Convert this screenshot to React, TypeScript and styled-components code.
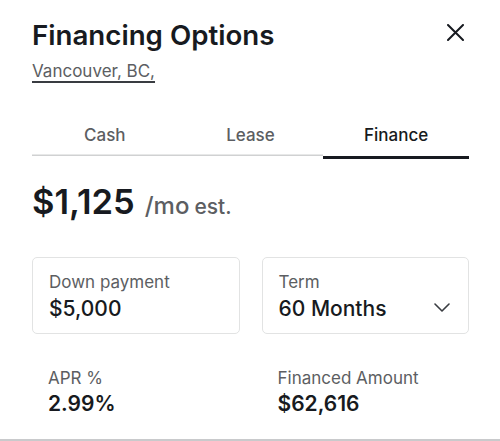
import React, { useState } from "react";
import styled, { createGlobalStyle } from "styled-components";

const GlobalStyle = createGlobalStyle`
  html, body { margin: 0; padding: 0; background: #ffffff; }
  body { font-family: Inter, "Noto Sans", sans-serif; color: #171a20; -webkit-font-smoothing: antialiased; }
  * { box-sizing: border-box; }
`;

const Panel = styled.div`
  width: 500px;
  height: 441px;
  padding: 19px 31px 0 32px;
  border-bottom: 2px solid #c9cacc;
  overflow: hidden;
`;

const Header = styled.div`
  display: flex;
  justify-content: space-between;
  align-items: flex-start;
`;

const Title = styled.h1`
  margin: 0;
  font-size: 27.7px;
  line-height: 32px;
  font-weight: 600;
  color: #171a20;
`;

const CloseButton = styled.button`
  border: 0;
  background: none;
  padding: 0;
  margin: 4px 5px 0 0;
  width: 18px;
  height: 18px;
  display: flex;
  align-items: center;
  justify-content: center;
  color: #171a20;
  cursor: pointer;
`;

const Location = styled.a`
  display: inline-block;
  margin-top: 10px;
  font-size: 17px;
  line-height: 20px;
  color: #5c5e62;
  text-decoration: underline;
  text-decoration-color: #393c41;
  text-underline-offset: 4px;
  text-decoration-thickness: 1.5px;
`;

const TabList = styled.div`
  display: grid;
  grid-template-columns: repeat(3, 1fr);
  margin-top: 44px;
`;

const Tab = styled.button<{ $active?: boolean }>`
  border: 0;
  background: none;
  font-family: inherit;
  font-size: 17px;
  line-height: 20px;
  font-weight: 500;
  padding: 0 0 11px;
  color: ${(p) => (p.$active ? "#171a20" : "#5c5e62")};
  border-bottom: 3px solid ${(p) => (p.$active ? "#171a20" : "transparent")};
  box-shadow: ${(p) => (p.$active ? "none" : "inset 0 -2px 0 -0.5px #d0d1d2")};
  cursor: pointer;
`;

const PriceRow = styled.div`
  display: flex;
  align-items: baseline;
  margin-top: 25px;
`;

const Price = styled.span`
  font-size: 34.5px;
  line-height: 36px;
  font-weight: 600;
  color: #171a20;
`;

const Per = styled.span`
  margin-left: 10px;
  font-size: 24px;
  font-weight: 500;
  color: #5c5e62;
`;

const Est = styled.span`
  margin-left: 5px;
  font-size: 21px;
  font-weight: 500;
  color: #5c5e62;
`;

const Fields = styled.div`
  display: grid;
  grid-template-columns: 1fr 1fr;
  column-gap: 22px;
  margin-top: 37px;
`;

const Field = styled.div`
  border: 1px solid #e2e3e3;
  border-radius: 5px;
  padding: 14px 16px 12px;
  display: flex;
  align-items: flex-end;
  justify-content: space-between;
`;

const FieldBody = styled.div`
  display: flex;
  flex-direction: column;
  gap: 5px;
`;

const Label = styled.span`
  font-size: 17px;
  line-height: 20px;
  color: #5c5e62;
`;

const Value = styled.span<{ $bold?: boolean }>`
  font-size: 21px;
  line-height: 24px;
  font-weight: ${(p) => (p.$bold ? 600 : 500)};
  color: #171a20;
`;

const Chevron = styled.span`
  display: flex;
  margin: 0 2px 9px 0;
  color: #393c41;
`;

const Stats = styled.div`
  display: grid;
  grid-template-columns: 1fr 1fr;
  column-gap: 22px;
  margin-top: 34px;
`;

const Stat = styled.div`
  display: flex;
  flex-direction: column;
  gap: 4px;
  padding-left: 16px;
`;

export default function App() {
  const [tab, setTab] = useState("Finance");
  return (
    <>
      <GlobalStyle />
      <Panel>
        <Header>
          <Title>Financing Options</Title>
          <CloseButton aria-label="Close">
            <svg width="17" height="17" viewBox="0 0 17 17" fill="none">
              <path d="M1 1L16 16M16 1L1 16" stroke="currentColor" strokeWidth="2" strokeLinecap="round" />
            </svg>
          </CloseButton>
        </Header>
        <Location href="#">Vancouver, BC,</Location>
        <TabList>
          {["Cash", "Lease", "Finance"].map((t) => (
            <Tab key={t} $active={tab === t} onClick={() => setTab(t)}>
              {t}
            </Tab>
          ))}
        </TabList>
        <PriceRow>
          <Price>$1,125</Price>
          <Per>/mo</Per>
          <Est>est.</Est>
        </PriceRow>
        <Fields>
          <Field>
            <FieldBody>
              <Label>Down payment</Label>
              <Value>$5,000</Value>
            </FieldBody>
          </Field>
          <Field>
            <FieldBody>
              <Label>Term</Label>
              <Value>60 Months</Value>
            </FieldBody>
            <Chevron>
              <svg width="16" height="9" viewBox="0 0 16 9" fill="none">
                <path d="M1 1L8 8L15 1" stroke="currentColor" strokeWidth="1.6" strokeLinecap="round" strokeLinejoin="round" />
              </svg>
            </Chevron>
          </Field>
        </Fields>
        <Stats>
          <Stat>
            <Label>APR %</Label>
            <Value $bold>2.99%</Value>
          </Stat>
          <Stat>
            <Label>Financed Amount</Label>
            <Value $bold>$62,616</Value>
          </Stat>
        </Stats>
      </Panel>
    </>
  );
}
